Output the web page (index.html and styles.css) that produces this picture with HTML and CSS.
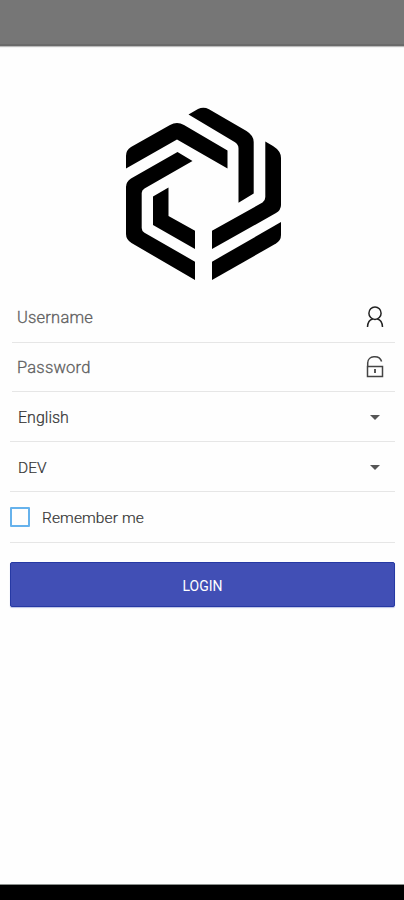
FILE: index.html
```
<!DOCTYPE html>
<html lang="en">
<head>
<meta charset="utf-8">
<title>Login</title>
<link rel="stylesheet" href="styles.css">
</head>
<body>
<div class="status-bar"></div>
<main class="screen">
  <svg class="logo" viewBox="125 107 157 174" aria-hidden="true">
    <path d="M126 168.5V156Q126 150 131 147L170 125Q177 121 184 125L227.5 150.5V168.5L177 139.5Z"/>
    <path d="M177.500 152L192.500 161L144.500 188.500Q141.700 190 141.700 193V228Q141.700 231 144.500 232.700L195 261.700V280L131.500 243Q126 239.500 126 234V187Q126 181.500 131 178.500Z"/>
    <path d="M168.500 187.500V216L195 230.700V249L153 225V196.500Z"/>
    <path d="M188.500 114.500L198 109Q203.500 106.500 209 109.200L246.500 131Q253.700 135.500 253.700 142V193.500L238.500 202.700V148.500Q238.500 144.500 235 142.300Z"/>
    <path d="M265.300 141.500L273 146Q281 151 281 158V205Q281 210 276 213L212 249V230.700L262.500 202.500Q265.300 200.500 265.300 197Z"/>
    <path d="M281 222V235Q281 240.500 276 243.500L212 280V261.700Z"/>
  </svg>
  <form class="form">
    <div class="row row-user">
      <span class="hint">Username</span>
      <svg class="icon" viewBox="0 0 20 24" aria-hidden="true"><ellipse cx="10" cy="8.200" rx="6.100" ry="6.200"/><path d="M2.500 22C2.700 17.500 4.800 14.800 7.800 14.100M12.200 14.100C15.200 14.800 17.300 17.500 17.500 22"/></svg>
    </div>
    <div class="row row-pass">
      <span class="hint">Password</span>
      <svg class="icon lock" viewBox="0 0 20 24" aria-hidden="true"><path d="M2.500 11.500H17.500V21.500H2.500ZM2.700 11.500V8C2.700 .2 14.500-.5 16.600 6.500"/><path class="keyhole" d="M10 14V18"/></svg>
    </div>
    <div class="row row-lang"><span class="value">English</span><i class="caret"></i></div>
    <div class="row row-env"><span class="value dev">DEV</span><i class="caret"></i></div>
    <label class="row row-check"><span class="box"></span><span class="remember">Remember me</span></label>
    <button class="login" type="button">LOGIN</button>
  </form>
</main>
<div class="nav-bar"></div>
</body>
</html>
```
FILE: styles.css
```
* { box-sizing: border-box; }
body {
  margin: 0;
  height: 900px;
  display: flex;
  flex-direction: column;
  background: #fefefe;
  color: #444;
  font-family: Roboto, "Liberation Sans", sans-serif;
}
.status-bar {
  height: 46px;
  background: #767676;
  border-bottom: 2px solid #6a6a6a;
  box-shadow: 0 1px 1px #bbb;
}
.screen { flex: 1; padding: 61px 9px 0 10px; }
.logo { display: block; width: 157px; height: 174px; margin-left: 115px; }
.form { padding-top: 12px; }
.row {
  display: flex;
  align-items: center;
  justify-content: space-between;
  height: 50px;
  padding: 0 10px 0 8px;
  border-bottom: 1px solid #e6e6e6;
  font-size: 16px;
}
.row-user { margin-left: 2px; padding: 0 10px 1px 5px; }
.row-pass { height: 49px; margin-left: 2px; padding-left: 5px; }
.row-lang, .row-env { padding-top: 1px; }
.row-check { height: 51px; justify-content: flex-start; gap: 12px; padding: 0; }
.hint { color: #606060; font-weight: 300; -webkit-text-stroke: .3px #606060; font-size: 16.500px; letter-spacing: .2px; }
.value, .remember { color: #333; font-weight: 300; -webkit-text-stroke: .2px #333; }
.value { padding-top: 1px; font-size: 16px; }
.dev { font-size: 15.500px; }
.remember { padding-top: 1px; font-size: 15.500px; letter-spacing: .1px; }
.icon { width: 20px; height: 24px; fill: none; stroke: #222; stroke-width: 1.500; }
.lock { stroke: #444; }
.keyhole { stroke-width: 1.800; }
.caret {
  width: 0;
  height: 0;
  margin-right: 5px;
  border: 5px solid transparent;
  border-top-color: #555;
  border-bottom: 0;
}
.box { width: 20px; height: 20px; border: 2px solid #66b2ec; border-radius: 1px; }
.login {
  display: block;
  width: 100%;
  height: 45px;
  margin-top: 19px;
  padding: 2px 0 0;
  border: 1px solid #2639a4;
  border-radius: 2px;
  background: #414fb5;
  box-shadow: 0 1px 1px #bbc1e5;
  color: #fff;
  font: 400 14px Roboto, "Liberation Sans", sans-serif;
}
.nav-bar { height: 16px; background: #000; border-top: 1px solid #8b908d; }
```
